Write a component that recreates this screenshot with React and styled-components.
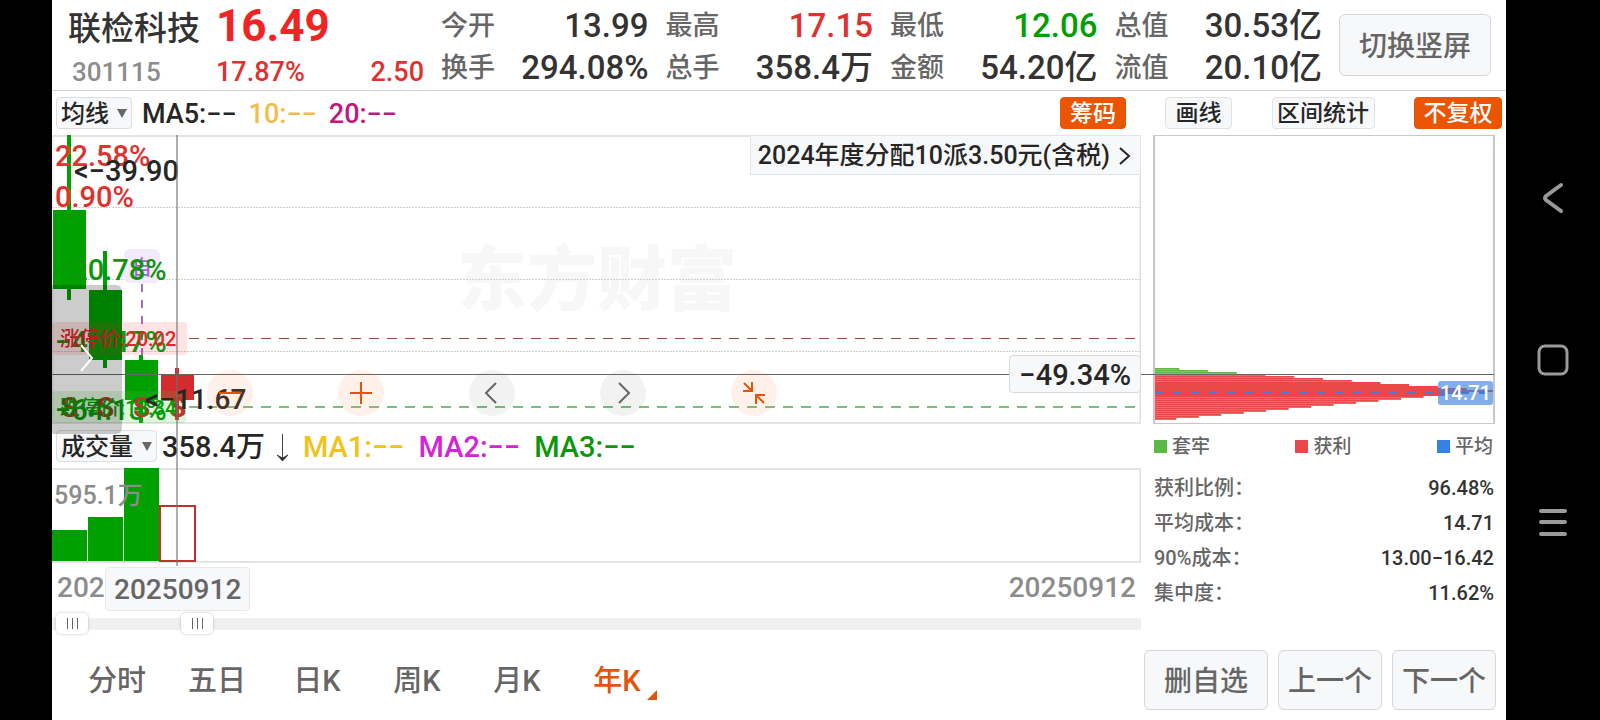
import React, { useState } from 'react';
import styled, { createGlobalStyle } from 'styled-components';

const GlobalStyle = createGlobalStyle`
  * {
    box-sizing: border-box;
  }
  body {
    margin: 0;
    background: #000;
    font-family: Roboto, 'Noto Sans CJK SC', sans-serif;
    font-weight: 500;
    color: #333;
  }
  button, select, input {
    font: inherit;
    color: inherit;
    margin: 0;
    padding: 0;
  }
  dl, dt, dd, h1, p {
    margin: 0;
    font-weight: inherit;
  }
`;

const RED = '#e03030';
const GREEN = '#00a000';

const Screen = styled.div`
  display: flex;
  min-height: 100vh;
  padding-left: 52px;
  background: #000;
`;

const Page = styled.main`
  display: flex;
  flex-direction: column;
  flex: 1;
  min-width: 0;
  background: #fff;
`;

const Header = styled.header`
  display: flex;
  align-items: stretch;
  height: 91px;
  border-bottom: 1px solid #d4d4d8;
  padding-right: 15px;
`;

const Stock = styled.div`
  width: 372px;
  padding-left: 16px;
`;

const StockTop = styled.div`
  display: grid;
  grid-template-columns: 148px 1fr;
  height: 52px;
  line-height: 52px;
`;

const StockName = styled.h1`
  font-size: 33px;
  line-height: 58px;
`;

const Price = styled.span`
  font-size: 44px;
  font-weight: 700;
  color: #f02424;
`;

const StockBottom = styled.div`
  display: grid;
  grid-template-columns: 148px 1fr auto;
  height: 38px;
  line-height: 40px;
  font-size: 27px;
  color: ${RED};
`;

const Code = styled.span`
  padding-left: 4px;
  font-size: 26px;
  color: #8c8c8c;
`;

const Quotes = styled.dl`
  flex: 1;
  display: grid;
  grid-template-columns: repeat(4, 1fr);
  grid-auto-rows: 42px;
  column-gap: 17px;
  padding: 5px 17px 0;
`;

const Quote = styled.div`
  display: flex;
  justify-content: space-between;
  line-height: 42px;
  white-space: nowrap;
`;

const QuoteLabel = styled.dt`
  font-size: 27px;
  color: #666;
`;

const QuoteValue = styled.dd`
  font-size: 33px;
  color: ${(p) => p.$color || '#333'};
`;

const OutlineButton = styled.button`
  width: ${(p) => p.$width}px;
  height: ${(p) => p.$height}px;
  padding-top: 4px;
  border: 1px solid #d4d6dc;
  border-radius: 6px;
  background: #f7f8fa;
  font-size: 28px;
  line-height: 40px;
  white-space: nowrap;
  color: #666;
`;

const SwitchButton = styled(OutlineButton)`
  align-self: center;
`;

const Columns = styled.div`
  position: relative;
  display: flex;
`;

const ChartColumn = styled.section`
  position: relative;
  flex: 1;
  min-width: 0;
`;

const SideColumn = styled.aside`
  width: 365px;
`;

const Toolbar = styled.div`
  display: flex;
  align-items: center;
  height: 44px;
  padding: 0 15px 0 4px;
  white-space: nowrap;
`;

const SideToolbar = styled(Toolbar)`
  justify-content: space-between;
  padding: 0 4px 0 24px;
`;

const Averages = styled.p`
  display: flex;
  flex: 1;
  gap: ${(p) => p.$gap}px;
  padding-top: 2px;
  padding-left: ${(p) => p.$start}px;
  font-size: ${(p) => p.$size}px;
  line-height: 40px;

  svg {
    overflow: visible;
  }
`;

const Average = styled.span`
  color: ${(p) => p.$color};
`;

const Chip = styled.button`
  width: ${(p) => p.$width}px;
  height: 32px;
  padding-top: 2px;
  border: 1px solid ${(p) => (p.$active ? '#ea5504' : '#e0e2e6')};
  border-radius: 4px;
  background: ${(p) => (p.$active ? '#ea5504' : '#f7f8fa')};
  color: ${(p) => (p.$active ? '#fff' : '#262626')};
  font-size: 23px;
  line-height: 28px;
`;

const Picker = styled.label`
  display: grid;
  align-items: center;
  width: ${(p) => p.$width}px;
  height: 32px;

  > * {
    grid-area: 1 / 1;
  }
  svg {
    justify-self: end;
    margin-right: 5px;
    pointer-events: none;
  }
`;

const PickerSelect = styled.select`
  appearance: none;
  width: 100%;
  height: 32px;
  padding: 2px 0 0 4px;
  border: 1px solid #dcdee3;
  border-radius: 4px;
  background: #f7f8fa;
  color: #262626;
  font-size: 24px;
  line-height: 28px;
`;

const PriceChart = styled.div`
  position: relative;
  height: 289px;
`;

const Plot = styled.svg`
  display: block;
  width: 100%;
  height: 100%;
`;

const Notice = styled.a`
  position: absolute;
  top: 0;
  right: 0;
  display: flex;
  align-items: center;
  gap: 8px;
  height: 40px;
  padding: 2px 8px 0 7px;
  border: 1px solid #e2e4e8;
  background: #f7f8fa;
  color: #262626;
  font-size: 24px;
  line-height: 36px;
  text-decoration: none;
  white-space: nowrap;

  span {
    font-size: 25px;
  }
`;

const Controls = styled.div`
  position: absolute;
  left: 155px;
  bottom: 8px;
  display: flex;
  gap: 85px;
`;

const RoundButton = styled.button`
  display: grid;
  place-items: center;
  width: 46px;
  height: 46px;
  border: 0;
  border-radius: 50%;
  background: ${(p) => (p.$warm ? 'rgba(255, 130, 70, 0.12)' : 'rgba(0, 0, 0, 0.05)')};
  color: ${(p) => (p.$warm ? '#e2540a' : '#666')};
`;

const Drawer = styled.button`
  position: absolute;
  z-index: 2;
  top: 150px;
  left: 0;
  width: 70px;
  height: 149px;
  padding: 0 0 0 28px;
  border: 0;
  border-radius: 0 6px 6px 0;
  background: rgba(0, 0, 0, 0.2);
  text-align: left;
`;

const CrossX = styled.div`
  position: absolute;
  top: 283px;
  left: 0;
  right: 12px;
  height: 1px;
  background: #666;
  pointer-events: none;
`;

const CrossY = styled.div`
  position: absolute;
  z-index: 1;
  top: 44px;
  left: 124px;
  width: 2px;
  height: 431px;
  background: rgba(110, 110, 110, 0.55);
  pointer-events: none;
`;

const CrossValue = styled.output`
  position: absolute;
  z-index: 1;
  right: 0;
  top: 220px;
  height: 38px;
  padding: 0 9px;
  border: 1px solid #d8dade;
  border-radius: 4px;
  background: #f7f8fa;
  color: #262626;
  font-size: 29px;
  line-height: 38px;
`;

const VolumeChart = styled.div`
  height: 95px;
`;

const Dates = styled.div`
  position: relative;
  display: flex;
  justify-content: space-between;
  height: 50px;
  padding: 0 5px;
  font-size: 28px;
  line-height: 50px;
  color: #8c8c8c;
`;

const DateTip = styled.output`
  position: absolute;
  top: 4px;
  left: 53px;
  height: 44px;
  padding: 0 8px;
  border: 1px solid #e6e8ec;
  border-radius: 4px;
  background: #f7f8fa;
  color: #666;
  line-height: 44px;
`;

const RangeTrack = styled.div`
  display: grid;
  align-items: center;
  height: 21px;
  background: linear-gradient(#f0f0f3, #f0f0f3) center / 100% 12px no-repeat;

  > * {
    grid-area: 1 / 1;
  }
`;

const RangeInput = styled.input`
  appearance: none;
  width: 100%;
  height: 21px;
  background: transparent;
  pointer-events: none;

  &::-webkit-slider-thumb {
    appearance: none;
    width: 32px;
    height: 21px;
    border-radius: 5px;
    background:
      linear-gradient(#666, #666) 11px 5px / 1px 11px no-repeat,
      linear-gradient(#666, #666) 16px 5px / 1px 11px no-repeat,
      linear-gradient(#666, #666) 21px 5px / 1px 11px no-repeat,
      #fff;
    box-shadow: 0 0 3px rgba(0, 0, 0, 0.25);
    pointer-events: auto;
  }
`;

const ChipChart = styled.div`
  position: relative;
  height: 289px;
  margin: 0 11px 0 12px;
  border: solid #c8c8c8;
  border-width: 1px 2px;
`;

const MeanTag = styled.output`
  position: absolute;
  right: 0;
  top: 245px;
  height: 24px;
  padding: 0 2px;
  border-radius: 3px;
  background: rgba(60, 130, 222, 0.64);
  color: #fff;
  font-size: 20px;
  line-height: 24px;
`;

const Legend = styled.div`
  display: flex;
  justify-content: space-between;
  height: 44px;
  padding: 0 13px;
  font-size: 19px;
  line-height: 45px;
  color: #666;
`;

const LegendItem = styled.span`
  display: flex;
  align-items: center;
  gap: 5px;

  &::before {
    content: '';
    width: 13px;
    height: 13px;
    background: ${(p) => p.$color};
  }
`;

const Stats = styled.dl`
  padding: 3px 12px 0 13px;
  font-size: 20px;
  line-height: 35px;
`;

const StatRow = styled.div`
  display: flex;
  justify-content: space-between;

  dt {
    color: #666;
  }
`;

const Footer = styled.footer`
  display: flex;
  flex: 1;
  align-items: center;
  justify-content: space-between;
  min-height: 80px;
  padding: 12px 10px 6px 15px;
`;

const Tabs = styled.nav`
  display: flex;
`;

const Tab = styled.button`
  position: relative;
  width: 100px;
  height: 60px;
  padding-top: 2px;
  border: 0;
  background: none;
  font-size: 29px;
  line-height: 44px;
  color: ${(p) => (p.$active ? '#e2540a' : '#666')};

  svg {
    position: absolute;
    right: 10px;
    bottom: 10px;
  }
`;

const Actions = styled.div`
  display: flex;
  gap: 10px;
`;

const SystemBar = styled.nav`
  display: grid;
  grid-auto-rows: 162px;
  align-content: center;
  width: 94px;
`;

const SystemButton = styled.button`
  display: grid;
  place-items: center;
  border: 0;
  background: none;
  color: #9a9a9a;
`;

const quotes = [
  ['今开', '13.99'],
  ['最高', '17.15', RED],
  ['最低', '12.06', GREEN],
  ['总值', '30.53亿'],
  ['换手', '294.08%'],
  ['总手', '358.4万'],
  ['金额', '54.20亿'],
  ['流值', '20.10亿'],
];

const stats = [
  ['获利比例：', '96.48%'],
  ['平均成本：', '14.71'],
  ['90%成本：', '13.00−16.42'],
  ['集中度：', '11.62%'],
];

const candles = [
  { x: 1, top: 75, bottom: 154, high: 0, low: 165, color: GREEN },
  { x: 37, top: 155, bottom: 225, high: 116, low: 233, color: GREEN },
  { x: 73, top: 225, bottom: 265, high: 220, low: 288, color: GREEN },
  { x: 109, top: 240, bottom: 265, high: 233, low: 285, color: '#d22c2c' },
];

const axis = [
  ['22.58%', 31, RED],
  ['0.90%', 72, RED],
  ['−20.78%', 145, '#0c960c'],
  ['−41.47%', 217, '#0c960c'],
  ['−64.13%', 285, '#0c960c'],
];

// 26 price levels, 2px each: widens to the peak at level 11, then narrows
const levels = Array.from({ length: 26 }, (_, i) => ({
  y: 232 + i * 2,
  width: i < 12 ? Math.min(100, 7.2 + i * 8.5) : 6.3 + (25 - i) * 6.65,
  color: i < 3 ? '#5bb947' : '#e84848',
}));

const Triangle = () => (
  <svg width="10" height="9" viewBox="0 0 10 9" aria-hidden="true">
    <path d="M0 0H10L5 9Z" fill="#666" />
  </svg>
);

function CandlePlot() {
  return (
    <Plot>
      <text x="405" y="170" fontSize="70" fontWeight="900" fill="#f7f7f7">
        东方财富
      </text>
      {[72, 144, 216].map((y) => (
        <line key={y} x1="0" x2="100%" y1={y + 0.5} y2={y + 0.5} stroke="#d0d0d0" strokeDasharray="2 1" />
      ))}
      <path d="M0 1H3000M0 288H3000" stroke="#e4e4e4" strokeWidth="2" />
      <line x1="100%" x2="100%" y1="0" y2="289" stroke="#e0e0e0" strokeWidth="3" />
      <line x1="1" x2="1" y1="0" y2="289" stroke="#e4e4e4" />

      <rect x="72" y="114" width="36" height="34" rx="6" fill="#f3ebfc" />
      <text x="80" y="140" fontSize="20" fill="#a763d0">自</text>
      <line x1="90" x2="90" y1="149" y2="225" stroke="#a46bc4" strokeWidth="2" strokeDasharray="8 8" />

      {candles.map((c) => (
        <g key={c.x} fill={c.color}>
          <rect x={c.x + 14} y={c.high} width="4" height={c.low - c.high} />
          <rect x={c.x} y={c.top} width="33" height={c.bottom - c.top} />
        </g>
      ))}

      <rect x="0" y="187" width="135" height="33" rx="4" fill="rgba(240, 60, 60, 0.14)" />
      <rect x="0" y="256" width="134" height="32" rx="4" fill="rgba(60, 200, 60, 0.18)" />
      <line x1="137" x2="100%" y1="203.5" y2="203.5" stroke="#a04040" strokeDasharray="10 8" />
      <line x1="137" x2="100%" y1="272" y2="272" stroke="#78c078" strokeWidth="2" strokeDasharray="10 8" />

      {axis.map(([label, y, color]) => (
        <text key={label} x="3" y={y} fontSize="29" fill={color}>{label}</text>
      ))}
      {[9, 45, 81, 117].map((x) => (
        <text key={x} x={x} y="282" fontSize="28" fontWeight="700" fill="#b4382c">S</text>
      ))}
      <text x="8" y="211" fontSize="20" fill="#dc2828">涨停价:20.02</text>
      <text x="8" y="280" fontSize="20" fill={GREEN}>跌停价:13.34</text>
      <text x="22" y="46" fontSize="29" fill="#262626">&lt;−39.90</text>
      <text x="93" y="274" fontSize="28" fill="#262626">&lt;−11.67</text>
    </Plot>
  );
}

function VolumePlot() {
  return (
    <Plot>
      <path d="M0 1H3000M0 94H3000" stroke="#e4e4e4" strokeWidth="2" />
      <line x1="100%" x2="100%" y1="0" y2="95" stroke="#e0e0e0" strokeWidth="3" />
      <g fill={GREEN}>
        <rect x="0" y="62" width="35" height="31" />
        <rect x="36" y="49" width="35" height="44" />
        <rect x="72" y="0" width="35" height="93" />
      </g>
      <rect x="108" y="38" width="35" height="55" fill="#fff" stroke="#c43030" strokeWidth="2" />
      <text x="2" y="36" fontSize="25" fill="#8c8c8c">595.1万</text>
    </Plot>
  );
}

function App() {
  const [period, setPeriod] = useState('年K');

  return (
    <Screen>
      <GlobalStyle />
      <Page>
        <Header>
          <Stock>
            <StockTop>
              <StockName>联检科技</StockName>
              <Price>16.49</Price>
            </StockTop>
            <StockBottom>
              <Code>301115</Code>
              <span>17.87%</span>
              <span>2.50</span>
            </StockBottom>
          </Stock>
          <Quotes>
            {quotes.map(([label, value, color]) => (
              <Quote key={label}>
                <QuoteLabel>{label}</QuoteLabel>
                <QuoteValue $color={color}>{value}</QuoteValue>
              </Quote>
            ))}
          </Quotes>
          <SwitchButton $width={152} $height={62}>切换竖屏</SwitchButton>
        </Header>

        <Columns>
          <ChartColumn>
            <Toolbar>
              <Picker $width={76}>
                <PickerSelect aria-label="主图指标">
                  <option>均线</option>
                </PickerSelect>
                <Triangle />
              </Picker>
              <Averages $size={27} $gap={12} $start={10}>
                <Average $color="#262626">MA5:−−</Average>
                <Average $color="#f2bc4a">10:−−</Average>
                <Average $color="#c2187c">20:−−</Average>
              </Averages>
              <Chip $active $width={66}>筹码</Chip>
            </Toolbar>

            <PriceChart>
              <CandlePlot />
              <Notice href="#dividend">
                <span>2024年度分配10派3.50元(含税)</span>
                <svg width="14" height="20" viewBox="0 0 14 20" fill="none" stroke="#262626" strokeWidth="2">
                  <path d="M2 2L11 10L2 18" />
                </svg>
              </Notice>
              <Controls>
                <RoundButton $warm aria-label="缩小">
                  <svg width="22" height="22" stroke="currentColor" strokeWidth="2"><path d="M0 11H22" /></svg>
                </RoundButton>
                <RoundButton $warm aria-label="放大">
                  <svg width="22" height="22" stroke="currentColor" strokeWidth="2"><path d="M0 11H22M11 0V22" /></svg>
                </RoundButton>
                <RoundButton aria-label="左移">
                  <svg width="22" height="22" fill="none" stroke="currentColor" strokeWidth="2"><path d="M15 1L5 11L15 21" /></svg>
                </RoundButton>
                <RoundButton aria-label="右移">
                  <svg width="22" height="22" fill="none" stroke="currentColor" strokeWidth="2"><path d="M7 1L17 11L7 21" /></svg>
                </RoundButton>
                <RoundButton $warm aria-label="收起">
                  <svg width="22" height="22" fill="none" stroke="currentColor" strokeWidth="2">
                    <path d="M0 9H9V0M1 1L9 9M22 13H13V22M21 21L13 13" />
                  </svg>
                </RoundButton>
              </Controls>
              <CrossValue>−49.34%</CrossValue>
              <Drawer aria-label="展开">
                <svg width="14" height="28" fill="none" stroke="#fff" strokeWidth="2"><path d="M1 1L12 14L1 27" /></svg>
              </Drawer>
            </PriceChart>

            <Toolbar>
              <Picker $width={101}>
                <PickerSelect aria-label="副图指标">
                  <option>成交量</option>
                </PickerSelect>
                <Triangle />
              </Picker>
              <Averages $size={29} $gap={14} $start={5}>
                <Average $color="#262626">358.4万</Average>
                <svg width="10" height="40" fill="none" stroke="#444" strokeWidth="1">
                  <path d="M3.5 7V33" />
                  <path d="M-2 28L3.5 31L9 28L3.5 34Z" fill="#262626" />
                </svg>
                <Average $color="#f2c21a">MA1:−−</Average>
                <Average $color="#d424d4">MA2:−−</Average>
                <Average $color="#0c960c">MA3:−−</Average>
              </Averages>
            </Toolbar>

            <VolumeChart>
              <VolumePlot />
            </VolumeChart>
            <Dates>
              <span>20221230</span>
              <span>20250912</span>
              <DateTip>20250912</DateTip>
            </Dates>
            <RangeTrack>
              <RangeInput type="range" min="0" max="1000" defaultValue="4" aria-label="起始" />
              <RangeInput type="range" min="0" max="1000" defaultValue="122" aria-label="结束" />
            </RangeTrack>
            <CrossY />
          </ChartColumn>

          <SideColumn>
            <SideToolbar>
              <Chip $width={67}>画线</Chip>
              <Chip $width={103}>区间统计</Chip>
              <Chip $active $width={88}>不复权</Chip>
            </SideToolbar>
            <ChipChart>
              <Plot>
                {levels.map((l) => (
                  <g key={l.y}>
                    <rect x="0" y={l.y} width={`${l.width}%`} height="2" fill={l.color} />
                    <rect x="0" y={l.y + 1} width={`${l.width}%`} height="1" fill="#fff" opacity={l.y > 244 && l.y < 260 ? 0 : 0.2} />
                  </g>
                ))}
                <line x1="0" x2="100%" y1="257" y2="257" stroke="#4a7acc" strokeWidth="2" strokeDasharray="8 10" />
              </Plot>
              <MeanTag>14.71</MeanTag>
            </ChipChart>
            <Legend>
              <LegendItem $color="#5bb947">套牢</LegendItem>
              <LegendItem $color="#e84848">获利</LegendItem>
              <LegendItem $color="#3482e4">平均</LegendItem>
            </Legend>
            <Stats>
              {stats.map(([label, value]) => (
                <StatRow key={label}>
                  <dt>{label}</dt>
                  <dd>{value}</dd>
                </StatRow>
              ))}
            </Stats>
          </SideColumn>
          <CrossX />
        </Columns>

        <Footer>
          <Tabs>
            {['分时', '五日', '日K', '周K', '月K', '年K'].map((name) => (
              <Tab key={name} $active={name === period} onClick={() => setPeriod(name)}>
                {name}
                {name === '年K' && (
                  <svg width="10" height="10"><path d="M10 0V10H0Z" fill="#e2540a" /></svg>
                )}
              </Tab>
            ))}
          </Tabs>
          <Actions>
            <OutlineButton $width={124} $height={60}>删自选</OutlineButton>
            <OutlineButton $width={104} $height={60}>上一个</OutlineButton>
            <OutlineButton $width={104} $height={60}>下一个</OutlineButton>
          </Actions>
        </Footer>
      </Page>

      <SystemBar>
        <SystemButton aria-label="返回">
          <svg width="30" height="32" fill="none" stroke="currentColor" strokeWidth="4" strokeLinecap="round" strokeLinejoin="round">
            <path d="M23 3L8 14Q6 16 8 18L23 29" />
          </svg>
        </SystemButton>
        <SystemButton aria-label="主页">
          <svg width="32" height="32" fill="none" stroke="currentColor" strokeWidth="3">
            <rect x="2" y="2" width="28" height="28" rx="6" />
          </svg>
        </SystemButton>
        <SystemButton aria-label="最近任务">
          <svg width="30" height="30" stroke="currentColor" strokeWidth="4" strokeLinecap="round">
            <path d="M3 4H27M3 15H27M3 27H27" />
          </svg>
        </SystemButton>
      </SystemBar>
    </Screen>
  );
}

export default App;
